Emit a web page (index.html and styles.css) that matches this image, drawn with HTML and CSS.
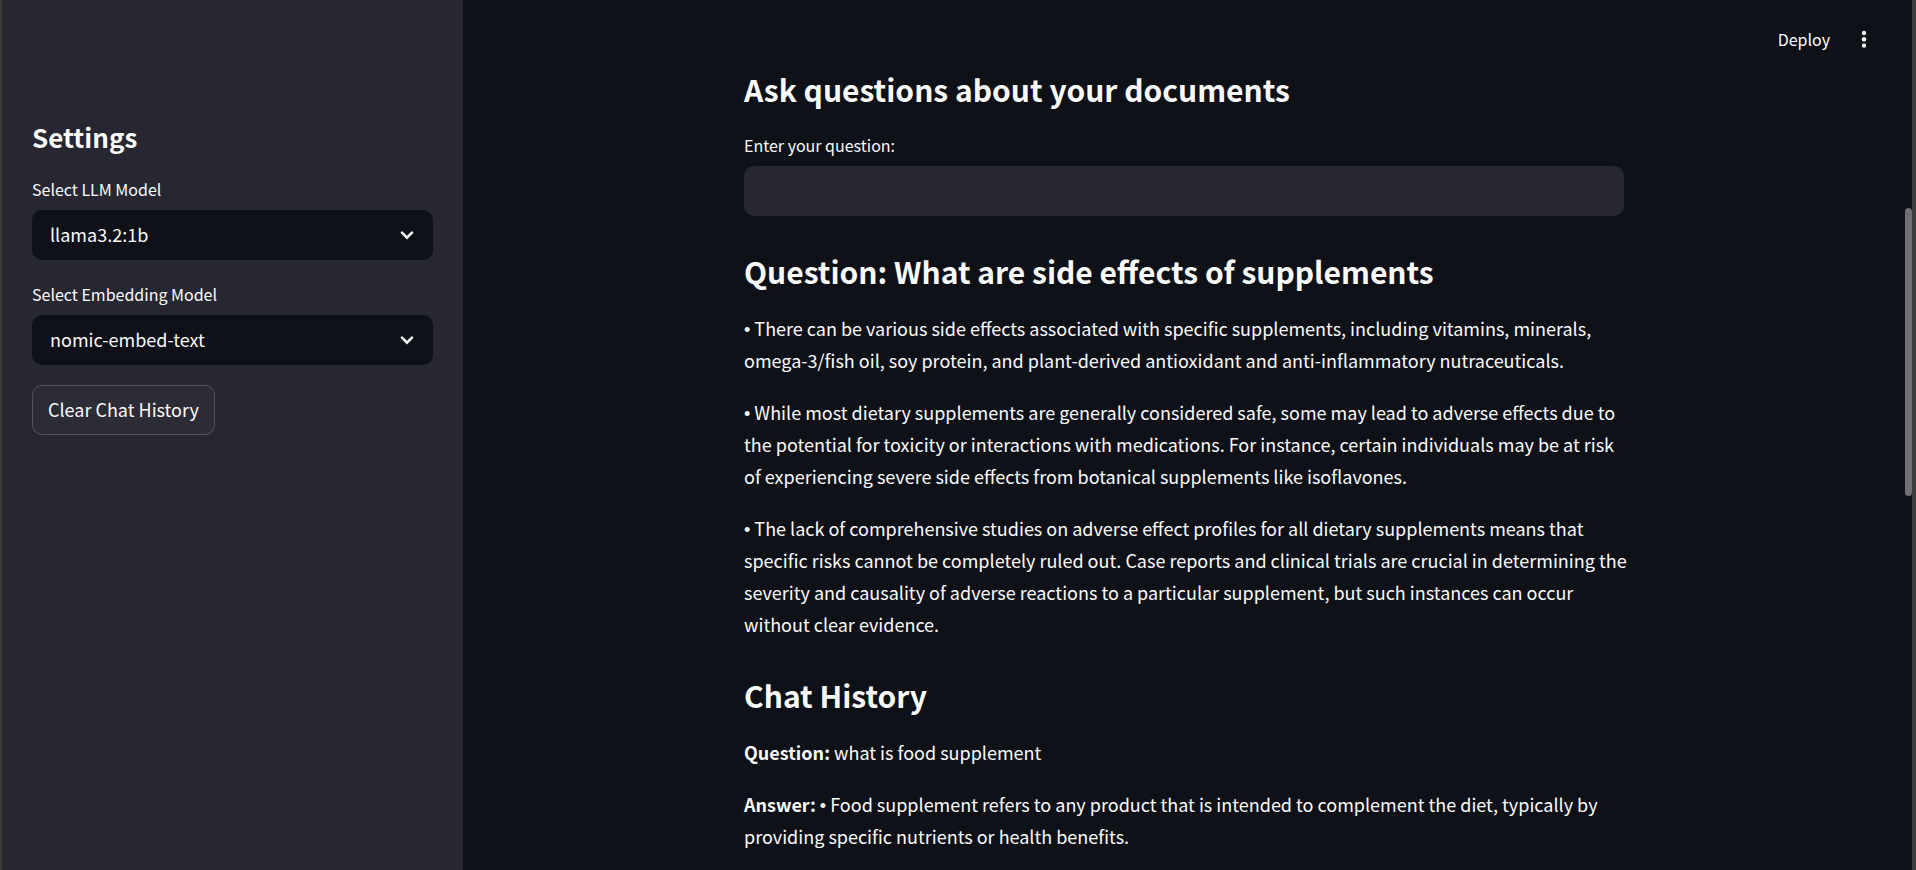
FILE: index.html
```html
<!DOCTYPE html>
<html lang="en">
<head>
<meta charset="utf-8">
<title>Ask questions about your documents</title>
<link rel="stylesheet" href="styles.css">
</head>
<body>
<div class="app">
  <aside class="sidebar">
    <h2 class="sidebar-title">Settings</h2>
    <div class="field">
      <label class="label" for="llm">Select LLM Model</label>
      <div class="select-wrap">
        <select class="control select" id="llm"><option>llama3.2:1b</option></select>
        <svg class="chevron" viewBox="0 0 24 24" aria-hidden="true"><path d="M7 9.7l5 5 5-5"/></svg>
      </div>
    </div>
    <div class="field">
      <label class="label" for="embed">Select Embedding Model</label>
      <div class="select-wrap">
        <select class="control select" id="embed"><option>nomic-embed-text</option></select>
        <svg class="chevron" viewBox="0 0 24 24" aria-hidden="true"><path d="M7 9.7l5 5 5-5"/></svg>
      </div>
    </div>
    <button class="clear" type="button">Clear Chat History</button>
  </aside>
  <div class="main">
    <header class="toolbar">
      <button class="tool" type="button">Deploy</button>
      <button class="tool" type="button" aria-label="Menu">
        <svg class="dots" viewBox="0 0 20 20" aria-hidden="true"><circle cx="10" cy="4" r="2.2"/><circle cx="10" cy="10.3" r="2.2"/><circle cx="10" cy="16.6" r="2.2"/></svg>
      </button>
    </header>
    <main class="content">
      <h2 class="heading">Ask questions about your documents</h2>
      <div class="field question-field">
        <label class="label" for="question">Enter your question:</label>
        <input class="control input" id="question" type="text">
      </div>
      <section class="section">
        <h2 class="heading">Question: What are side effects of supplements</h2>
        <p><span class="bullet">•</span> There can be various side effects associated with specific supplements, including vitamins, minerals, omega-3/fish oil, soy protein, and plant-derived antioxidant and anti-inflammatory nutraceuticals.</p>
        <p><span class="bullet">•</span> While most dietary supplements are generally considered safe, some may lead to adverse effects due to the potential for toxicity or interactions with medications. For instance, certain individuals may be at risk of experiencing severe side effects from botanical supplements like isoflavones.</p>
        <p><span class="bullet">•</span> The lack of comprehensive studies on adverse effect profiles for all dietary supplements means that specific risks cannot be completely ruled out. Case reports and clinical trials are crucial in determining the severity and causality of adverse reactions to a particular supplement, but such instances can occur without clear evidence.</p>
      </section>
      <section class="section">
        <h2 class="heading">Chat History</h2>
        <p><strong>Question:</strong> what is food supplement</p>
        <p><strong>Answer:</strong> <span class="bullet">•</span> Food supplement refers to any product that is intended to complement the diet, typically by providing specific nutrients or health benefits.</p>
      </section>
    </main>
    <div class="scroll-thumb"></div>
  </div>
</div>
</body>
</html>
```
FILE: styles.css
```css
* { box-sizing: border-box; }

body {
  margin: 0;
  background: #0e1117;
  color: #fafafa;
  font-family: "Noto Sans CJK SC", "Noto Sans", sans-serif;
  font-size: 18px;
  line-height: 32px;
}

h2, p { margin: 0; }

.app {
  display: flex;
  min-height: 100vh;
  border-left: 2px solid #3c3c3b;
  border-right: 4px solid #3c3c3b;
}

.sidebar {
  display: flex;
  flex-direction: column;
  gap: 20px;
  flex: 0 0 461px;
  padding: 119px 30px 20px;
  background: #262730;
}

.sidebar-title {
  font-size: 26px;
  font-weight: 700;
  line-height: 36px;
}

.field {
  display: flex;
  flex-direction: column;
  gap: 7px;
}

.label {
  font-size: 16px;
  line-height: 28px;
}

.control {
  width: 100%;
  height: 50px;
  padding: 0 18px 2px;
  border: 0;
  border-radius: 10px;
  color: inherit;
  font: inherit;
}

.select-wrap { position: relative; }

.select {
  display: block;
  appearance: none;
  background: #0e1117;
}

.chevron {
  position: absolute;
  top: 13px;
  right: 14px;
  width: 24px;
  height: 24px;
  fill: none;
  stroke: #fafafa;
  stroke-width: 2.6;
  stroke-linecap: round;
  pointer-events: none;
}

.clear {
  align-self: flex-start;
  height: 50px;
  padding: 0 15px 2px;
  border: 1px solid #53545c;
  border-radius: 10px;
  background: #2b2c36;
  color: inherit;
  font: inherit;
}

.main {
  position: relative;
  flex: 1;
  padding: 0 7px 0 0;
}

.toolbar {
  position: absolute;
  top: 23px;
  right: 38px;
  display: flex;
  align-items: center;
  gap: 24px;
}

.tool {
  display: flex;
  padding: 0;
  border: 0;
  background: none;
  color: inherit;
  font: inherit;
  font-size: 16px;
}

.dots {
  width: 20px;
  height: 20px;
  fill: #fafafa;
}

.content {
  max-width: 880px;
  margin: 0 auto;
  padding: 68px 0 15px;
}

.heading {
  padding-bottom: 20px;
  font-size: 30px;
  font-weight: 700;
  line-height: 42px;
}

.question-field { padding-top: 1px; }

.section { padding-top: 34px; }

.section p { margin-right: -4px; }

.section p + p { margin-top: 20px; }

.bullet {
  font-family: "Liberation Sans", sans-serif;
  line-height: 1;
}

.input { background: #262730; }

.scroll-thumb {
  position: absolute;
  top: 208px;
  right: 0;
  width: 7px;
  height: 288px;
  border-radius: 4px;
  background: #6f7074;
}
```
